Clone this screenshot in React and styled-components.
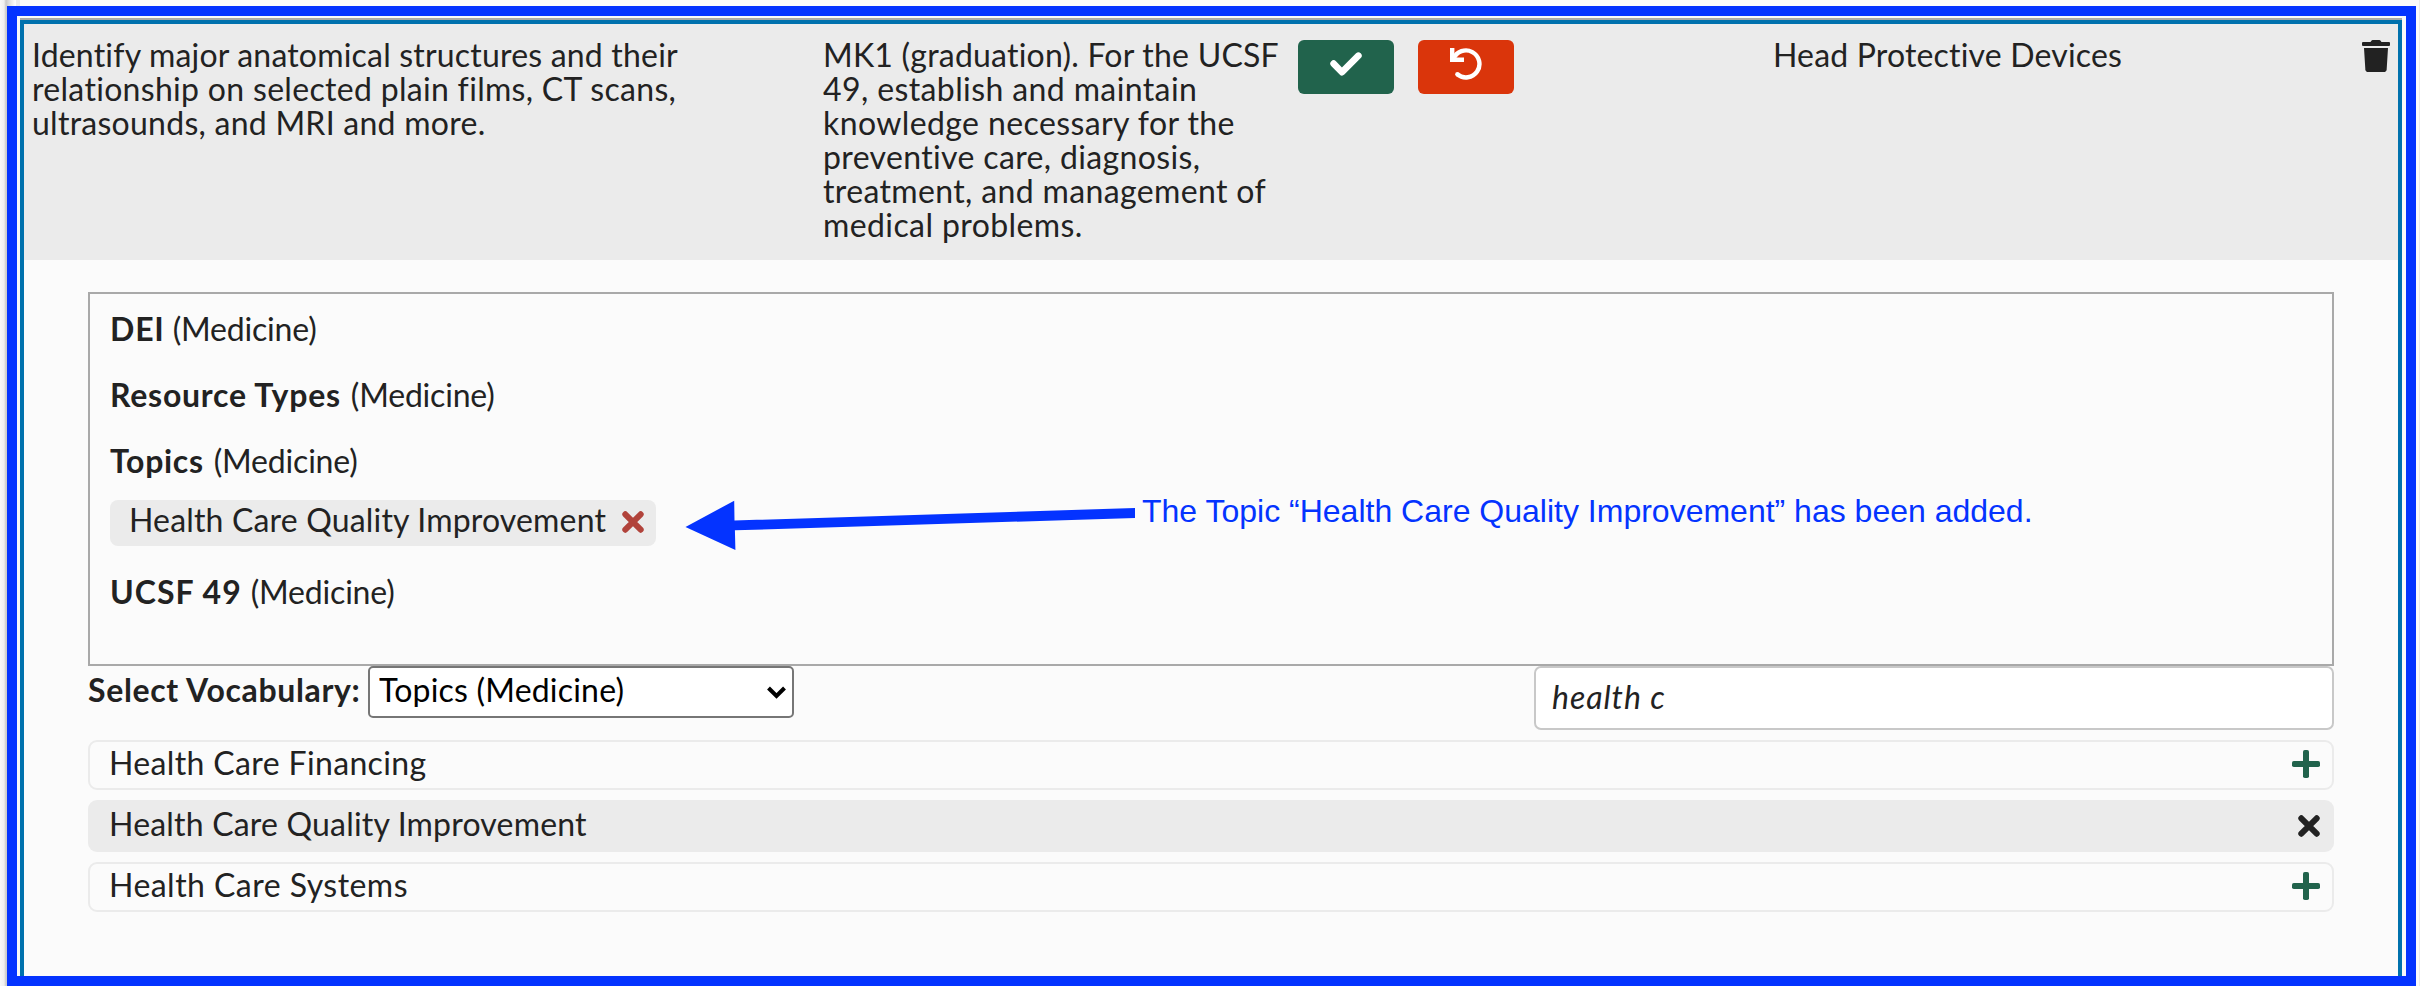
import React from "react";
import styled, { createGlobalStyle } from "styled-components";

const GlobalStyle = createGlobalStyle`
  *, *::before, *::after { box-sizing: border-box; }
  body {
    margin: 0;
    background: #fbfbfb;
    color: #222;
    font-family: Lato, "Open Sans", sans-serif;
    font-size: 32px;
    line-height: 34px;
  }
`;

const Page = styled.div`
  position: relative;
  height: 986px;
  padding: 6px 4px 0 7px;
  overflow: hidden;
  border-right: 1px solid #ebebeb;
  background: linear-gradient(
    to right,
    #f8f8f8 0, #efefef 4px, #c9c9c9 6px, #dedede 9px, #fbfbfb 15px,
    #fbfbfb 16px, #ebebeb 16px, #ebebeb 20px, #fbfbfb 20px
  );
`;

const Frame = styled.div`
  height: 980px;
  width: 2409px;
  padding: 2px 4px 0 3px;
  border: 10px solid #0433ff;
  background: #f8f8f8;
`;

const Record = styled.section`
  height: 958px;
  display: flex;
  flex-direction: column;
  border-top: 2px solid #a9a9a9;
  background: #fbfbfb;
`;

const RecordBody = styled.div`
  flex: 1;
  border: 4px solid #0071ad;
  border-bottom: 0;
`;

const Header = styled.header`
  display: grid;
  grid-template-columns: 791px 475px 475px 1fr 28px;
  height: 236px;
  padding: 14px 8px 0 8px;
  background: #ebebeb;
`;

const Text = styled.span`
  display: ${(p) => (p.$block ? "block" : "inline")};
  white-space: nowrap;
  letter-spacing: ${(p) => p.$track || 0}px;
  font-weight: ${(p) => (p.$bold ? 700 : 400)};
`;

const Actions = styled.div`
  display: flex;
  gap: 24px;
  padding-top: 2px;
`;

const ActionButton = styled.button`
  display: flex;
  justify-content: center;
  width: 96px;
  height: 54px;
  padding: ${(p) => p.$top}px 0 0;
  border: 0;
  border-radius: 6px;
  background: ${(p) => p.$color};
`;

const TrashButton = styled.button`
  display: block;
  height: 32px;
  margin-top: 2px;
  padding: 0;
  border: 0;
  background: none;
  svg { display: block; }
`;

const Manager = styled.div`
  width: 2246px;
  margin: 32px 0 0 64px;
`;

const Selected = styled.div`
  height: 374px;
  padding: 18px 20px;
  border: 2px solid #a9a9a9;
`;

const Group = styled.div`
  margin-bottom: ${(p) => (p.$last ? 0 : p.$chips ? 29 : 32)}px;
`;

const GroupTitle = styled.div`
  display: flex;
  gap: ${(p) => p.$gap}px;
`;

const Chip = styled.div`
  display: inline-flex;
  justify-content: space-between;
  vertical-align: top;
  width: 546px;
  height: 46px;
  margin: 22px 0 0;
  padding: 0 12px 0 19px;
  border-radius: 8px;
  background: #ebebeb;
  line-height: 40px;
  svg { margin-top: 11px; }
`;

const Controls = styled.div`
  display: flex;
  align-items: flex-start;
  height: 74px;
`;

const Label = styled.label`
  width: 280px;
  line-height: 48px;
`;

const SelectWrap = styled.div`
  position: relative;
  width: 426px;
  height: 52px;
  svg { position: absolute; right: 8px; top: 20px; }
`;

const Select = styled.select`
  display: block;
  width: 100%;
  height: 52px;
  padding: 0 8px 4px 9px;
  appearance: none;
  border: 2px solid #767676;
  border-radius: 5px;
  background: #fff;
  color: #000;
  font: inherit;
  letter-spacing: 0.2px;
`;

const Search = styled.input`
  width: 800px;
  height: 64px;
  margin-left: auto;
  padding: 0 16px 4px;
  border: 2px solid #c8c8c8;
  border-radius: 7px;
  background: #fff;
  color: #222;
  font: inherit;
  font-style: italic;
  letter-spacing: 0.95px;
`;

const Terms = styled.ul`
  display: flex;
  flex-direction: column;
  gap: 10px;
  margin: 0;
  padding: 0;
  list-style: none;
`;

const Term = styled.li`
  display: flex;
  justify-content: space-between;
  align-items: center;
  height: ${(p) => (p.$selected ? 52 : 50)}px;
  padding: 0 ${(p) => (p.$selected ? 14 : 12)}px 0 ${(p) => (p.$selected ? 21 : 19)}px;
  border: ${(p) => (p.$selected ? "0" : "2px solid #ebebeb")};
  border-radius: 9px;
  background: ${(p) => (p.$selected ? "#ebebeb" : "transparent")};
  ${Text} { margin-bottom: ${(p) => (p.$selected ? 4 : 5)}px; }
  svg { margin-bottom: ${(p) => (p.$selected ? 0 : 2)}px; }
`;

const Annotation = styled.div`
  position: absolute;
  left: 685px;
  top: 500px;
  display: flex;
  align-items: flex-start;
  color: #0433ff;
  font-family: "Liberation Sans", Arial, sans-serif;
  line-height: 36px;
  white-space: nowrap;
`;

const Note = styled.span`
  margin: -7px 0 0 7px;
`;

const CheckIcon = () => (
  <svg width="32" height="24" viewBox="0 0 32 24" fill="none" stroke="#fff" strokeWidth="6.6" strokeLinecap="round" strokeLinejoin="round">
    <path d="M3.6 11.6 12 20.2 28.4 3.7" />
  </svg>
);

const UndoIcon = () => (
  <svg width="32" height="32" viewBox="0 0 32 32" fill="none" stroke="#fff" strokeWidth="4.4">
    <path d="M2.2 0V11.8H14" />
    <path d="M3.5 10.7A13.5 13.5 0 1 1 7.3 26.3" />
    <circle cx="7.4" cy="26.3" r="2.2" fill="#fff" stroke="none" />
  </svg>
);

const TrashIcon = () => (
  <svg width="28" height="32" viewBox="0 0 28 32" fill="#222">
    <path d="M1 2H8.5L9.4.7Q9.9 0 10.7 0H17.3Q18.1 0 18.6.7L19.5 2H27Q28 2 28 3V5Q28 6 27 6H1Q0 6 0 5V3Q0 2 1 2Z" />
    <path d="M2 8H26L24.7 29.2Q24.5 32 21.7 32H6.3Q3.5 32 3.3 29.2Z" />
  </svg>
);

const CrossIcon = ({ color }) => (
  <svg width="22" height="22" viewBox="0 0 22 22" stroke={color} strokeWidth="6" strokeLinecap="round">
    <path d="M3.3 3.3 18.7 18.7M18.7 3.3 3.3 18.7" />
  </svg>
);

const PlusIcon = () => (
  <svg width="28" height="28" viewBox="0 0 28 28" fill="#21634c">
    <rect x="11" y="0" width="6" height="28" rx="1.8" />
    <rect x="0" y="11" width="28" height="6" rx="1.8" />
  </svg>
);

const ChevronIcon = () => (
  <svg width="19" height="13" viewBox="0 0 19 13" fill="none" stroke="#000" strokeWidth="4">
    <path d="M1.5 2 9.5 10 17.5 2" />
  </svg>
);

const ArrowIcon = () => (
  <svg width="450" height="50" viewBox="0 0 450 50" fill="#0433ff">
    <path d="M.5 27 49.2.7 49.5 20.5 450 8V18L49.9 30.3 50.4 50Z" />
  </svg>
);

const title = [
  ["Identify major anatomical structures and their", 0.19],
  ["relationship on selected plain films, CT scans,", 0.31],
  ["ultrasounds, and MRI and more.", 0.26],
];

const parent = [
  ["MK1 (graduation). For the UCSF", 0.22],
  ["49, establish and maintain", 0.39],
  ["knowledge necessary for the", 0.4],
  ["preventive care, diagnosis,", 0.36],
  ["treatment, and management of", 0.36],
  ["medical problems.", 0.4],
];

const groups = [
  { name: "DEI", track: 0.8, gap: 8 },
  { name: "Resource Types", track: 0.75, gap: 10 },
  { name: "Topics", track: 0.7, gap: 10, chip: "Health Care Quality Improvement" },
  { name: "UCSF 49", track: 1, gap: 9 },
];

const terms = [
  { name: "Health Care Financing", track: 0.36 },
  { name: "Health Care Quality Improvement", track: 0.19, selected: true },
  { name: "Health Care Systems", track: 0.46 },
];

const Lines = ({ lines }) => (
  <div>
    {lines.map(([text, track]) => (
      <Text key={text} $block $track={track}>{text}</Text>
    ))}
  </div>
);

export default function App() {
  return (
    <>
      <GlobalStyle />
      <Page>
        <Frame>
          <Record>
            <RecordBody>
              <Header>
                <Lines lines={title} />
                <Lines lines={parent} />
                <Actions>
                  <ActionButton $color="#21634c" $top={12} aria-label="Save"><CheckIcon /></ActionButton>
                  <ActionButton $color="#da350b" $top={8} aria-label="Undo"><UndoIcon /></ActionButton>
                </Actions>
                <Text $track={0.17}>Head Protective Devices</Text>
                <TrashButton aria-label="Remove"><TrashIcon /></TrashButton>
              </Header>
              <Manager>
                <Selected>
                  {groups.map((g, i) => (
                    <Group key={g.name} $chips={!!g.chip} $last={i === groups.length - 1}>
                      <GroupTitle $gap={g.gap}>
                        <Text $bold $track={g.track}>{g.name}</Text>
                        <Text $track={-0.19}>(Medicine)</Text>
                      </GroupTitle>
                      {g.chip && (
                        <Chip>
                          <Text $track={0.17}>{g.chip}</Text>
                          <CrossIcon color="#b1433b" />
                        </Chip>
                      )}
                    </Group>
                  ))}
                </Selected>
                <Controls>
                  <Label htmlFor="vocabulary"><Text $bold $track={0.65}>Select Vocabulary:</Text></Label>
                  <SelectWrap>
                    <Select id="vocabulary"><option>Topics (Medicine)</option></Select>
                    <ChevronIcon />
                  </SelectWrap>
                  <Search defaultValue="health c" />
                </Controls>
                <Terms>
                  {terms.map((t) => (
                    <Term key={t.name} $selected={t.selected}>
                      <Text $track={t.track}>{t.name}</Text>
                      {t.selected ? <CrossIcon color="#222" /> : <PlusIcon />}
                    </Term>
                  ))}
                </Terms>
              </Manager>
            </RecordBody>
          </Record>
        </Frame>
        <Annotation>
          <ArrowIcon />
          <Note>The Topic “Health Care Quality Improvement” has been added.</Note>
        </Annotation>
      </Page>
    </>
  );
}
